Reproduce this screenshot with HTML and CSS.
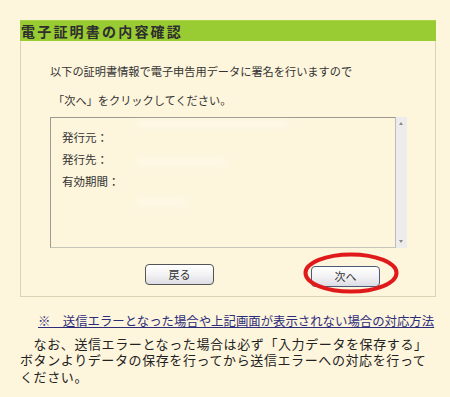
FILE: index.html
```html
<!DOCTYPE html>
<html lang="ja">
<head>
<meta charset="utf-8">
<link rel="stylesheet" href="styles.css">
</head>
<body>
<div class="panel">
  <div class="panel-head">電子証明書の内容確認</div>
  <div class="panel-body">
    <p class="msg msg1">以下の証明書情報で電子申告用データに署名を行いますので</p>
    <p class="msg msg2">「次へ」をクリックしてください。</p>
    <div class="certbox">
      <div class="certlist">
        <div class="row"><span class="lbl">発行元：</span><span class="smudge s1"></span></div>
        <div class="row"><span class="lbl">発行先：</span><span class="smudge s2"></span></div>
        <div class="row"><span class="lbl">有効期間：</span><span class="smudge s3"></span></div>
      </div>
      <div class="scrollbar">
        <span class="arrow up"></span>
        <span class="arrow down"></span>
      </div>
    </div>
    <div class="buttons">
      <button class="btn back">戻る</button>
      <div class="next-wrap">
        <button class="btn next">次へ</button>
        <svg class="circle" width="96" height="42" viewBox="0 0 96 42"><ellipse cx="48" cy="21" rx="45.5" ry="18.5" fill="none" stroke="#e01a1a" stroke-width="4"/></svg>
      </div>
    </div>
  </div>
</div>
<p class="link-line"><a class="help" href="#">※　送信エラーとなった場合や上記画面が表示されない場合の対応方法</a></p>
<p class="note">　なお、送信エラーとなった場合は必ず「入力データを保存する」ボタンよりデータの保存を行ってから送信エラーへの対応を行ってください。</p>
</body>
</html>
```
FILE: styles.css
```css
html, body {
  margin: 0;
  padding: 0;
  background: #fdf5dc;
}
body {
  padding: 20px 0 0 20px;
  font-family: "Noto Sans CJK JP", "Noto Sans", sans-serif;
  color: #333;
  width: 430px;
}
.panel {
  width: 414px;
  border: 1px solid #dcd3b4;
  border-top: none;
  background: #fdf5dc;
}
.panel-head {
  height: 21px;
  margin: 0 -1px;
  background: #99cc33;
  border-top: 1px solid #a9d44a;
  box-sizing: border-box;
  font-size: 14px;
  font-weight: bold;
  letter-spacing: 2.2px;
  line-height: 20px;
  padding-left: 1px;
  color: #2e2e2e;
}
.panel-body {
  padding: 22px 0 9px 29px;
}
.msg {
  margin: 0;
  font-size: 11.2px;
  line-height: 16px;
  color: #333;
}
.msg2 {
  margin-top: 13px;
  padding-left: 3px;
}
.certbox {
  margin-top: 9px;
  display: flex;
  width: 357px;
  height: 131px;
}
.certlist {
  flex: 1;
  border: 1px solid #9a9a8e;
  border-right-color: #bdbdb2;
  border-bottom-color: #c4c4b8;
  padding: 8px 0 0 11px;
}
.row {
  position: relative;
  font-size: 11.5px;
  line-height: 22px;
  height: 22px;
  color: #333;
}
.smudge {
  position: absolute;
  background: #ffffff;
  filter: blur(3px);
  opacity: 0.3;
  height: 8px;
}
.s1 { left: 75px; top: -6px; width: 150px; }
.s2 { left: 75px; top: 10px; width: 90px; }
.s3 { left: 75px; top: 28px; width: 50px; }
.scrollbar {
  width: 11px;
  background: #ececec;
  position: relative;
}
.arrow {
  position: absolute;
  left: 3px;
  width: 0;
  height: 0;
  border-left: 2.5px solid transparent;
  border-right: 2.5px solid transparent;
}
.arrow.up { top: 5px; border-bottom: 3px solid #888; }
.arrow.down { bottom: 5px; border-top: 3px solid #888; }
.buttons {
  display: flex;
  align-items: center;
  margin-top: 14px;
  padding-left: 95px;
}
.btn {
  width: 69px;
  height: 21px;
  border: 1px solid #555;
  border-radius: 4px;
  background: linear-gradient(#ffffff, #f3f3f5 50%, #dcdce4);
  font-family: "Noto Sans CJK JP", sans-serif;
  font-size: 11px;
  color: #333;
  padding: 0;
  line-height: 18px;
}
.next-wrap {
  position: relative;
  margin-left: 97px;
}
.next {
  border-color: #4a5a78;
}
.circle {
  position: absolute;
  left: -8px;
  top: -10px;
}
.link-line {
  margin: 16px 0 0 18px;
  font-size: 12.4px;
  line-height: 16px;
}
.help {
  color: #2c2c7a;
  text-decoration: underline;
}
.note {
  margin: 7px 0 0 0;
  font-size: 13px;
  letter-spacing: 0.6px;
  line-height: 16.5px;
  width: 412px;
  color: #222;
}
```
